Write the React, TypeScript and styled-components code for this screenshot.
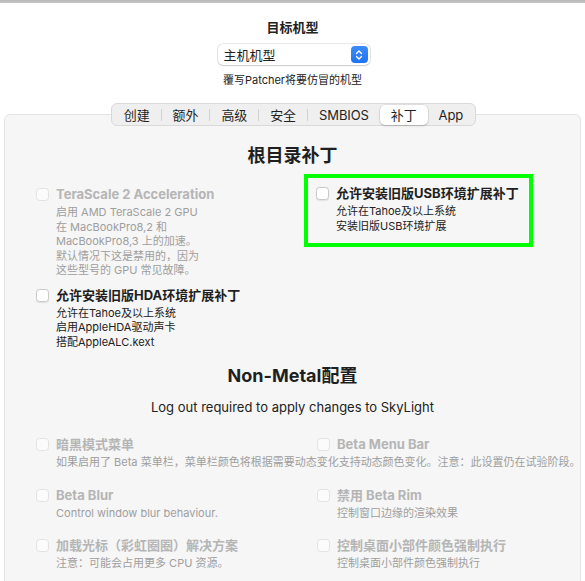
import * as React from 'react';
import styled, { createGlobalStyle } from 'styled-components';

const FONT = `Inter, "Noto Sans CJK SC", sans-serif`;

type PatchItem = {
    title: string;
    lines: string[];
    disabled?: boolean;
    nowrap?: boolean;
    highlighted?: boolean;
};

const TABS = ['创建', '额外', '高级', '安全', 'SMBIOS', '补丁', 'App'];
const SELECTED_TAB = '补丁';

const ROOT_LEFT: PatchItem[] = [
    {
        title: 'TeraScale 2 Acceleration',
        lines: [
            '启用 AMD TeraScale 2 GPU',
            '在 MacBookPro8,2 和',
            'MacBookPro8,3 上的加速。',
            '默认情况下这是禁用的，因为',
            '这些型号的 GPU 常见故障。',
        ],
        disabled: true,
    },
    {
        title: '允许安装旧版HDA环境扩展补丁',
        lines: ['允许在Tahoe及以上系统', '启用AppleHDA驱动声卡', '搭配AppleALC.kext'],
    },
];

const ROOT_RIGHT: PatchItem = {
    title: '允许安装旧版USB环境扩展补丁',
    lines: ['允许在Tahoe及以上系统', '安装旧版USB环境扩展'],
    highlighted: true,
};

const NON_METAL: PatchItem[] = [
    {
        title: '暗黑模式菜单',
        lines: [
            '如果启用了 Beta 菜单栏，菜单栏颜色将根据需要动态变化支持动态颜色变化。注意：此设置仍在试验阶段。如果遇到问题请禁用。',
        ],
        disabled: true,
        nowrap: true,
    },
    { title: 'Beta Menu Bar', lines: [], disabled: true },
    { title: 'Beta Blur', lines: ['Control window blur behaviour.'], disabled: true },
    { title: '禁用 Beta Rim', lines: ['控制窗口边缘的渲染效果'], disabled: true },
    { title: '加载光标（彩虹圈圈）解决方案', lines: ['注意：可能会占用更多 CPU 资源。'], disabled: true },
    { title: '控制桌面小部件颜色强制执行', lines: ['控制桌面小部件颜色强制执行'], disabled: true },
];

const GlobalStyle = createGlobalStyle`
    html, body {
        margin: 0;
        padding: 0;
        background: #ffffff;
        font-family: ${FONT};
        -webkit-font-smoothing: antialiased;
    }
`;

const Patch = ({ item }: { item: PatchItem }) => {
    const body = (
        <ItemRow>
            <Checkbox $disabled={item.disabled} />
            <ItemText>
                <ItemTitle $disabled={item.disabled}>{item.title}</ItemTitle>
                {item.lines.length > 0 && (
                    <ItemDesc $disabled={item.disabled} $nowrap={item.nowrap}>
                        {item.lines.map((line) => (
                            <div key={line}>{line}</div>
                        ))}
                    </ItemDesc>
                )}
            </ItemText>
        </ItemRow>
    );
    return item.highlighted ? <Highlight>{body}</Highlight> : body;
};

const Stepper = () => (
    <StepperBox>
        <svg width="8" height="12" viewBox="0 0 8 12" fill="none">
            <path d="M1.5 4.5 L4 2 L6.5 4.5" stroke="#fff" strokeWidth="1.4" strokeLinecap="round" strokeLinejoin="round" />
            <path d="M1.5 7.5 L4 10 L6.5 7.5" stroke="#fff" strokeWidth="1.4" strokeLinecap="round" strokeLinejoin="round" />
        </svg>
    </StepperBox>
);

const App = () => {
    return (
        <Window>
            <GlobalStyle />
            <TopEdge />
            <Header>
                <HeaderTitle>目标机型</HeaderTitle>
                <Popup>
                    <PopupLabel>主机机型</PopupLabel>
                    <Stepper />
                </Popup>
                <HeaderHint>覆写Patcher将要仿冒的机型</HeaderHint>
            </Header>

            <TabBar>
                {TABS.map((tab, i) => {
                    const prev = TABS[i - 1];
                    const showSep = i > 0 && tab !== SELECTED_TAB && prev !== SELECTED_TAB;
                    return (
                        <React.Fragment key={tab}>
                            {showSep && <TabSep />}
                            <Tab $active={tab === SELECTED_TAB}>{tab}</Tab>
                        </React.Fragment>
                    );
                })}
            </TabBar>

            <Panel>
                <SectionTitle>根目录补丁</SectionTitle>
                <RootGrid>
                    <Column>
                        {ROOT_LEFT.map((item) => (
                            <Patch key={item.title} item={item} />
                        ))}
                    </Column>
                    <Column>
                        <Patch item={ROOT_RIGHT} />
                    </Column>
                </RootGrid>

                <SectionTitle $top={16}>Non-Metal配置</SectionTitle>
                <SectionNote>Log out required to apply changes to SkyLight</SectionNote>
                <PairGrid>
                    {NON_METAL.map((item) => (
                        <Patch key={item.title} item={item} />
                    ))}
                </PairGrid>
            </Panel>
        </Window>
    );
};

const Window = styled.div`
    width: 585px;
    height: 581px;
    overflow: hidden;
    display: flex;
    flex-direction: column;
    background: #ffffff;
    color: #1f1f1f;
`;

const TopEdge = styled.div`
    height: 3px;
    flex-shrink: 0;
    background: linear-gradient(to bottom, #b9b9b9, #c4c4c4);
`;

const Header = styled.div`
    display: flex;
    flex-direction: column;
    align-items: center;
    padding-top: 16px;
`;

const HeaderTitle = styled.div`
    font-size: 13px;
    font-weight: 700;
    line-height: 16px;
    color: #222;
`;

const Popup = styled.div`
    margin-top: 9px;
    margin-left: 2px;
    width: 152px;
    height: 21px;
    box-sizing: border-box;
    display: flex;
    align-items: center;
    justify-content: space-between;
    padding: 0 2px 0 6px;
    background: #ffffff;
    border-radius: 5px;
    box-shadow: 0 0 0 0.5px rgba(0, 0, 0, 0.18), 0 1px 1.5px rgba(0, 0, 0, 0.12);
`;

const PopupLabel = styled.span`
    font-size: 13px;
    color: #1f1f1f;
`;

const StepperBox = styled.span`
    width: 17px;
    height: 17px;
    border-radius: 4px;
    background: linear-gradient(to bottom, #3b8cfa, #1f73f2);
    display: flex;
    align-items: center;
    justify-content: center;
`;

const HeaderHint = styled.div`
    margin-top: 8px;
    font-size: 11px;
    line-height: 14px;
    color: #222;
`;

const TabBar = styled.div`
    position: relative;
    z-index: 1;
    align-self: center;
    margin: 16px 0 -12px 2px;
    height: 23px;
    box-sizing: border-box;
    padding: 1px;
    display: flex;
    align-items: center;
    background: #efefef;
    border: 0.5px solid #d9d9d9;
    border-radius: 6px;
`;

const Tab = styled.div<{ $active?: boolean }>`
    height: 20px;
    display: flex;
    align-items: center;
    padding: 0 11px;
    font-size: 13px;
    letter-spacing: -0.1px;
    color: #1f1f1f;
    border-radius: 5px;
    background: ${({ $active }) => ($active ? '#ffffff' : 'transparent')};
    box-shadow: ${({ $active }) =>
        $active ? '0 0 0 0.5px rgba(0,0,0,0.12), 0 1px 2px rgba(0,0,0,0.15)' : 'none'};
`;

const TabSep = styled.span`
    width: 1px;
    height: 12px;
    background: #d2d2d2;
`;

const Panel = styled.div`
    flex: 1;
    min-height: 520px;
    margin: 0 4px;
    overflow: hidden;
    background: #f6f6f6;
    border: 1px solid #e4e4e4;
    border-radius: 6px;
    padding: 30px 0 0 31px;
`;

const SectionTitle = styled.div<{ $top?: number }>`
    margin-top: ${({ $top }) => $top ?? 0}px;
    margin-right: 31px;
    text-align: center;
    font-size: 18px;
    font-weight: 700;
    line-height: 22px;
    color: #1f1f1f;
`;

const SectionNote = styled.div`
    margin-top: 12px;
    margin-right: 31px;
    text-align: center;
    font-size: 13px;
    line-height: 16px;
    color: #222;
`;

const RootGrid = styled.div`
    margin-top: 19px;
    display: grid;
    grid-template-columns: 281px 1fr;
`;

const Column = styled.div`
    display: flex;
    flex-direction: column;
    align-items: flex-start;
    gap: 9px;
`;

const PairGrid = styled.div`
    margin-top: 21px;
    display: grid;
    grid-template-columns: 281px 1fr;
    row-gap: 17px;
`;

const Highlight = styled.div`
    border: 4px solid #00ff00;
    padding: 7px 10px 10px 8px;
    margin: -12px 0 0 -13px;
`;

const ItemRow = styled.div`
    display: flex;
    align-items: flex-start;
    gap: 7px;
    min-width: 0;
`;

const Checkbox = styled.span<{ $disabled?: boolean }>`
    flex-shrink: 0;
    margin-top: 2px;
    width: 13px;
    height: 13px;
    box-sizing: border-box;
    border-radius: 3.5px;
    background: ${({ $disabled }) => ($disabled ? '#fbfbfb' : '#ffffff')};
    border: 1px solid ${({ $disabled }) => ($disabled ? '#e2e2e2' : '#c9c9c9')};
    box-shadow: ${({ $disabled }) => ($disabled ? 'none' : '0 0.5px 1px rgba(0,0,0,0.08)')};
`;

const ItemText = styled.div`
    display: flex;
    flex-direction: column;
    min-width: 0;
`;

const ItemTitle = styled.div<{ $disabled?: boolean }>`
    font-size: 13px;
    font-weight: 700;
    line-height: 16px;
    color: ${({ $disabled }) => ($disabled ? '#b5b5b5' : '#1f1f1f')};
    white-space: nowrap;
`;

const ItemDesc = styled.div<{ $disabled?: boolean; $nowrap?: boolean }>`
    margin-top: 3px;
    font-size: 11px;
    line-height: 14.5px;
    color: ${({ $disabled }) => ($disabled ? '#9e9e9e' : '#222')};
    white-space: ${({ $nowrap }) => ($nowrap ? 'nowrap' : 'normal')};
`;

export default App;
